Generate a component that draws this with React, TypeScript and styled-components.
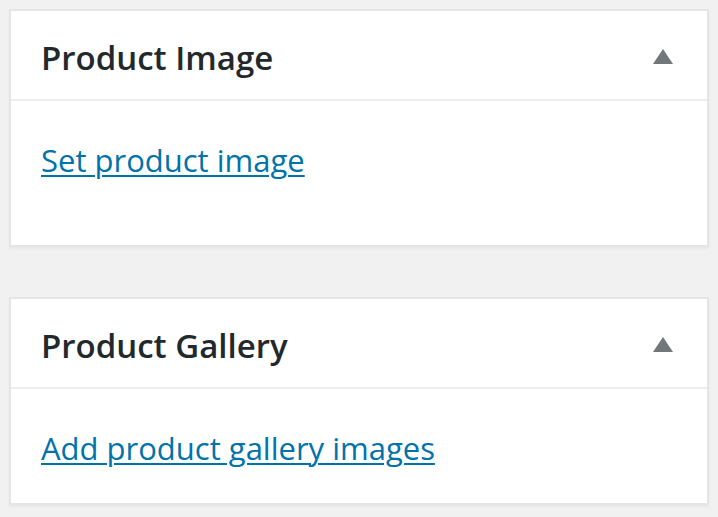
import React from 'react';
import styled, {createGlobalStyle} from "styled-components";

const GlobalStyle = createGlobalStyle`
  body {
    margin: 0;
    background: #f1f1f1;
    font-family: "Open Sans", "Noto Sans", "Liberation Sans", sans-serif;
  }
`

const CSSPage = styled.div`
  display: flex;
  flex-direction: column;
  gap: 50px;
  padding: 9px;
`

const CSSPostbox = styled.div`
  width: 696px;
  background: #fff;
  border: 2px solid #e5e5e5;
  box-shadow: 0 2px 2px rgba(0, 0, 0, 0.04);
`

const CSSPostboxHeader = styled.div`
  display: flex;
  align-items: flex-start;
  justify-content: space-between;
  height: 90px;
  box-sizing: border-box;
  padding: 27px 34px 0 30px;
  border-bottom: 2px solid #eee;

  h2 {
    margin: 0;
    font-size: 33px;
    line-height: 40px;
    font-weight: 600;
    color: #23282d;
  }
`

const CSSToggle = styled.button`
  border: 0;
  padding: 0;
  margin-top: 11px;
  background: none;
  width: 20px;
  height: 15px;
  cursor: pointer;

  svg {
    display: block;
  }
`

const CSSInside = styled.div<{ $extra: number }>`
  padding: 39px 30px ${p => 35 + p.$extra}px;
  font-size: 31px;
  line-height: 40px;

  a {
    color: #0073aa;
    text-decoration: underline;
    text-decoration-thickness: 2px;
    text-underline-offset: 3px;
  }
`

type PostboxProps = {
    title: string;
    link: string;
    extra?: number;
};

const Postbox = ({title, link, extra = 0}: PostboxProps) => (
    <CSSPostbox>
        <CSSPostboxHeader>
            <h2>{title}</h2>
            <CSSToggle aria-label="Toggle panel">
                <svg width="20" height="15" viewBox="0 0 20 15">
                    <polygon points="10,0 20,15 0,15" fill="#72777c"/>
                </svg>
            </CSSToggle>
        </CSSPostboxHeader>
        <CSSInside $extra={extra}>
            <a href="#">{link}</a>
        </CSSInside>
    </CSSPostbox>
);

const App = () => (
    <>
        <GlobalStyle/>
        <CSSPage>
            <Postbox title="Product Image" link="Set product image" extra={30}/>
            <Postbox title="Product Gallery" link="Add product gallery images"/>
        </CSSPage>
    </>
);

export default App;
